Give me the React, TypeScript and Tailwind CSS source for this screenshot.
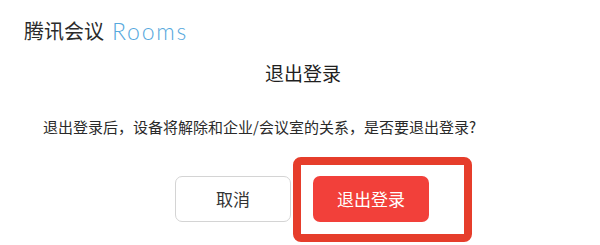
const cjk = { fontFamily: '"Noto Sans CJK SC", "Noto Sans", sans-serif' };

export default function App() {
  return (
    <div className="relative w-[600px] h-[245px] bg-white overflow-hidden text-[#262626]" style={cjk}>
      {/* Header */}
      <div className="h-[62px] flex items-center pl-[24px]">
        <span className="text-[20px] leading-none text-[#2b2b2b]">腾讯会议</span>
        <span
          className="ml-[8px] text-[23px] leading-none font-light tracking-[1.8px] text-[#56a8dd]"
          style={{ fontFamily: '"Lato", "Open Sans", sans-serif' }}
        >
          Rooms
        </span>
      </div>

      {/* Title */}
      <div className="h-[21px] flex items-center justify-center pl-[6px]">
        <span className="text-[19px] leading-none text-[#1f1f1f]">退出登录</span>
      </div>

      {/* Body */}
      <div className="h-[87px] flex items-center pl-[43px]">
        <p className="text-[15px] leading-none text-[#2a2a2a]">
          退出登录后，设备将解除和企业/会议室的关系，是否要退出登录?
        </p>
      </div>

      {/* Buttons */}
      <div className="pt-[6px] flex justify-center gap-[22px] pl-[4px]">
        <button className="w-[116px] h-[46px] rounded-[7px] border border-[#d4d4d4] bg-white text-[17px] text-[#333]">
          取消
        </button>
        <button className="w-[116px] h-[46px] rounded-[7px] bg-[#f2403a] text-[17px] text-white">
          退出登录
        </button>
      </div>

      {/* Annotation outline */}
      <div className="absolute left-[293px] top-[157px] w-[179px] h-[85px] border-[8px] border-[#e63d2b] rounded-[8px]" />
    </div>
  );
}
